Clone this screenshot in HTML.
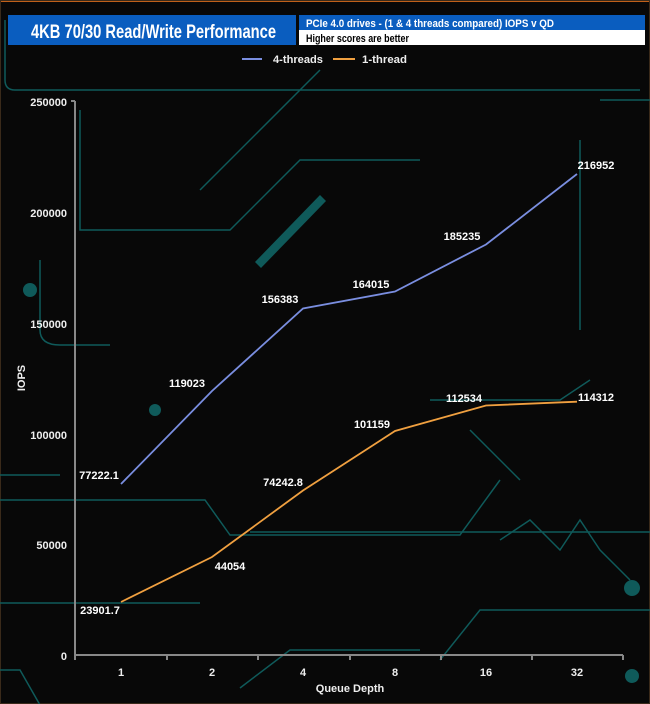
<!DOCTYPE html><html><head><style>
body{margin:0;width:650px;height:704px;overflow:hidden;background:#070707;font-family:"Liberation Sans",sans-serif}
</style></head><body>
<svg width="650" height="704" xmlns="http://www.w3.org/2000/svg" style="position:absolute;left:0;top:0" font-family="Liberation Sans Narrow, Liberation Sans, sans-serif">
<rect width="650" height="704" fill="#080808"/>
<rect x="0" y="0" width="650" height="2" fill="#c0601a"/>
<rect x="0.5" y="0.5" width="649" height="703" fill="none" stroke="#3a2a1a"/>
<g fill="none" stroke="#0f5a5a" stroke-width="1.5">
<path d="M5 20 V80 Q5 90 15 90 H640"/>
<path d="M80 110 V230 H230 L300 160 H420"/>
<path d="M40 260 V330 Q40 345 60 345 H110"/>
<path d="M0 475 H60 M0 500 H205 L230 535 H460 L500 480"/>
<path d="M0 603 H200 M250 532 H650"/>
<path d="M0 670 H20 L40 705 M240 688 L290 650 H420"/>
<path d="M600 100 H650 M580 140 V330"/>
<path d="M430 400 H560 L590 380 M470 430 L520 480"/>
<path d="M200 190 L320 70"/>
<path d="M440 660 L480 610 H650"/>
<path d="M500 540 L530 520 L560 550 L580 520 L600 550 L630 580"/>
</g>
<g fill="#0f5a5a"><circle cx="632" cy="588" r="8"/><circle cx="632" cy="676" r="7"/><circle cx="30" cy="290" r="7"/><circle cx="155" cy="410" r="6"/>
<path d="M255 262 L320 195 L326 201 L261 268Z"/></g>
<rect x="8" y="15" width="288" height="30" fill="#0a5dbf"/>
<text x="31" y="38" font-size="19" font-weight="bold" fill="#fff" textLength="245" lengthAdjust="spacingAndGlyphs">4KB 70/30 Read/Write Performance</text>
<rect x="299" y="15" width="346" height="15" fill="#0a5dbf"/>
<rect x="299" y="30" width="346" height="15" fill="#fff"/>
<text x="306" y="27" font-size="11" font-weight="bold" fill="#fff" textLength="248" lengthAdjust="spacingAndGlyphs">PCIe 4.0 drives - (1 &amp; 4 threads compared) IOPS v QD</text>
<text x="306" y="42" font-size="11" font-weight="bold" fill="#000" textLength="103" lengthAdjust="spacingAndGlyphs">Higher scores are better</text>
<g font-size="11" font-weight="bold" fill="#eee">
<line x1="242" y1="59" x2="262" y2="59" stroke="#7a8ee0" stroke-width="2"/><text x="273" y="63" textLength="50" lengthAdjust="spacingAndGlyphs">4-threads</text>
<line x1="333" y1="59" x2="355" y2="59" stroke="#f0a040" stroke-width="2"/><text x="362" y="63" textLength="45" lengthAdjust="spacingAndGlyphs">1-thread</text>
</g>
<g stroke="#888" stroke-width="2" fill="none">
<path d="M75 101 H71 M75 101 V655 H623"/>
<path d="M75 655 V660 M167 655 V660 M258 655 V660 M350 655 V660 M441 655 V660 M532 655 V660 M623 655 V660"/>
</g>
<g font-size="11" font-weight="bold" fill="#eee" text-anchor="end">
<text x="67" y="106">250000</text><text x="67" y="217">200000</text><text x="67" y="328">150000</text><text x="67" y="439">100000</text><text x="67" y="549">50000</text><text x="67" y="660">0</text>
</g>
<g font-size="11" font-weight="bold" fill="#eee" text-anchor="middle">
<text x="121" y="676">1</text><text x="212" y="676">2</text><text x="303" y="676">4</text><text x="395" y="676">8</text><text x="486" y="676">16</text><text x="577" y="676">32</text>
<text x="350" y="692">Queue Depth</text>
<text transform="translate(25 378) rotate(-90)">IOPS</text>
</g>
<polyline points="121,484 212,391 303,308.5 395,291.5 486,244.5 577,174" fill="none" stroke="#7a8ee0" stroke-width="1.8"/>
<polyline points="121,602 212,557 303,490.5 395,431 486,405.5 577,401.7" fill="none" stroke="#f0a040" stroke-width="1.8"/>
<g font-size="11" font-weight="bold" fill="#fff" text-anchor="middle">
<text x="99" y="479">77222.1</text><text x="187" y="387">119023</text><text x="280" y="303">156383</text><text x="371" y="288">164015</text><text x="462" y="240">185235</text><text x="596" y="169">216952</text>
<text x="100" y="614">23901.7</text><text x="230" y="570">44054</text><text x="283" y="486">74242.8</text><text x="372" y="428">101159</text><text x="464" y="402">112534</text><text x="596" y="401">114312</text>
</g>
</svg>
</body></html>
